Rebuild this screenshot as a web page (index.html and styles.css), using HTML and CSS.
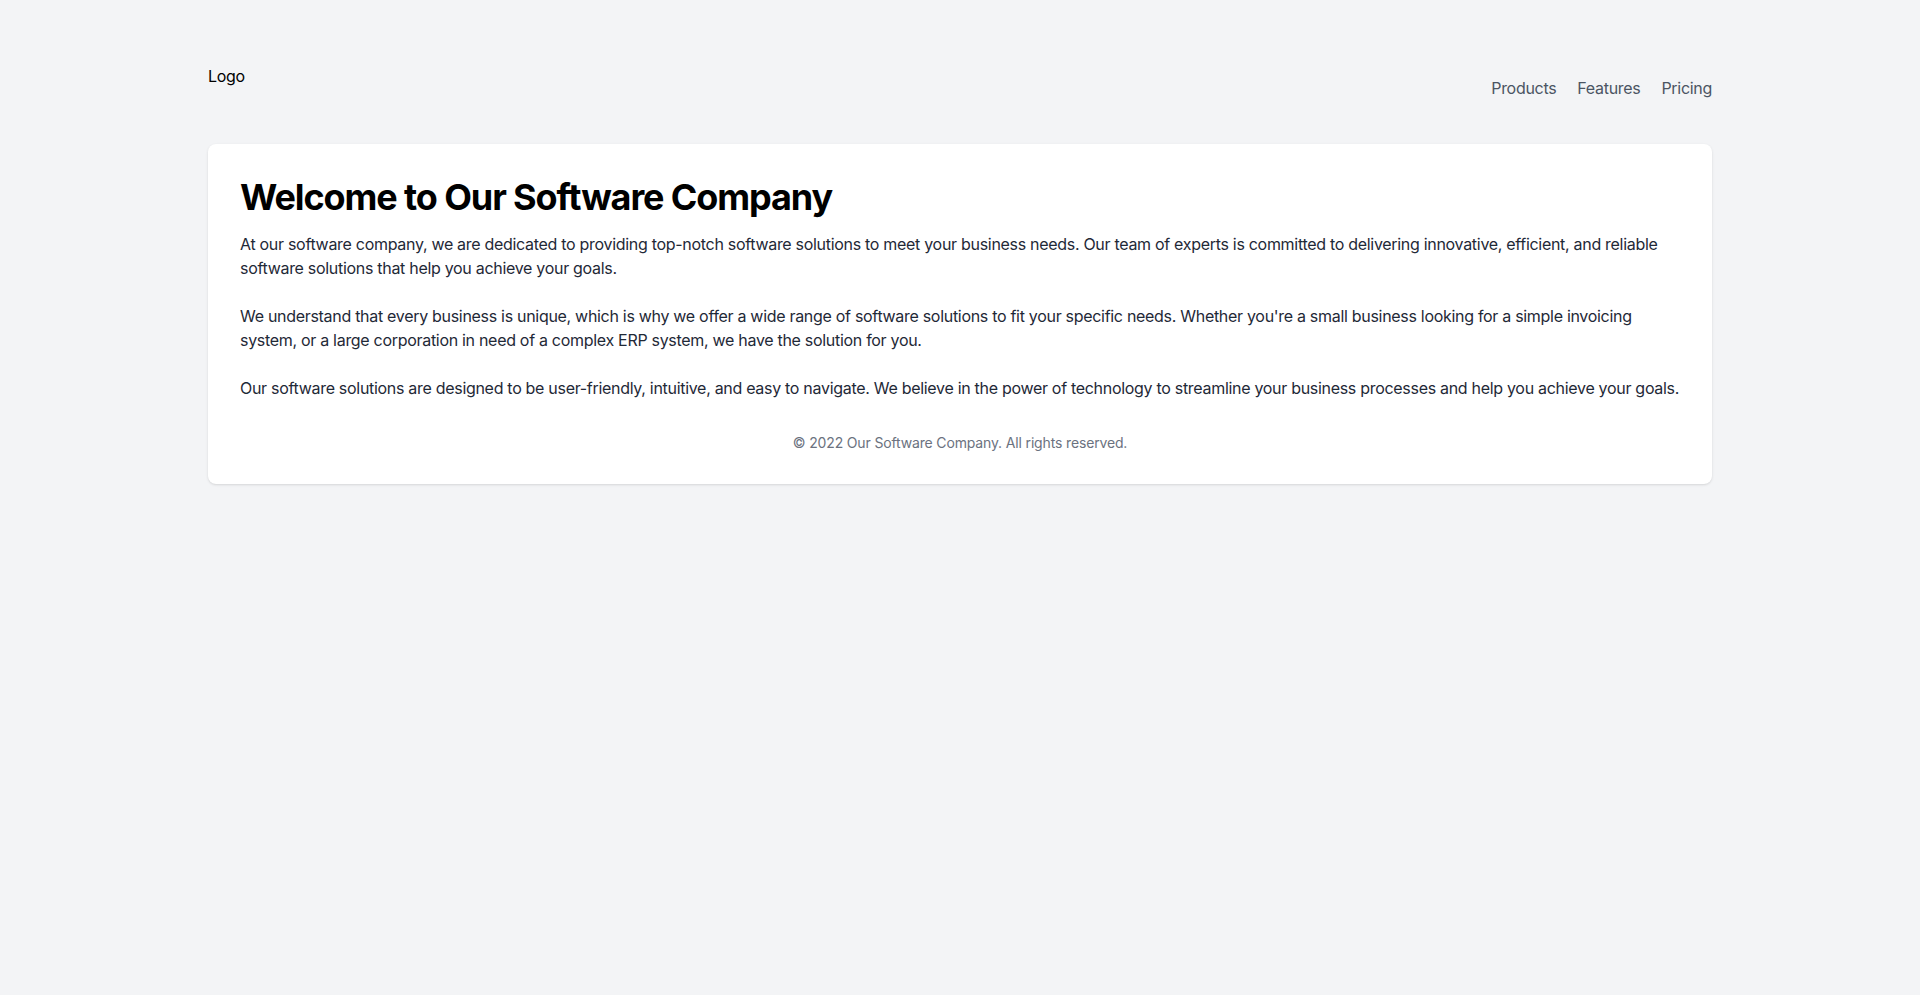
FILE: index.html
```html
<!DOCTYPE html>
<html lang="en">
<head>
<meta charset="utf-8">
<title>Our Software Company</title>
<link rel="stylesheet" href="styles.css">
</head>
<body>
<div class="container">
  <header class="header">
    <div class="logo">Logo</div>
    <nav class="nav">
      <a href="#" class="nav-link">Products</a>
      <a href="#" class="nav-link">Features</a>
      <a href="#" class="nav-link">Pricing</a>
    </nav>
  </header>
  <main class="card">
    <h1 class="title">Welcome to Our Software Company</h1>
    <p class="text text-first">At our software company, we are dedicated to providing top-notch software solutions to meet your business needs. Our team of experts is committed to delivering innovative, efficient, and reliable software solutions that help you achieve your goals.</p>
    <p class="text">We understand that every business is unique, which is why we offer a wide range of software solutions to fit your specific needs. Whether you're a small business looking for a simple invoicing system, or a large corporation in need of a complex ERP system, we have the solution for you.</p>
    <p class="text">Our software solutions are designed to be user-friendly, intuitive, and easy to navigate. We believe in the power of technology to streamline your business processes and help you achieve your goals.</p>
    <footer class="footer">© 2022 Our Software Company. All rights reserved.</footer>
  </main>
</div>
</body>
</html>
```

FILE: styles.css
```css
* { box-sizing: border-box; }
html, body { margin: 0; padding: 0; }
body {
  background: #f3f4f6;
  font-family: Inter, "Noto Sans", "Liberation Sans", sans-serif;
  font-size: 16px;
  line-height: 24px;
  letter-spacing: -0.3px;
  color: #000;
  min-height: 995px;
}
.container {
  max-width: 1536px;
  margin: 0 auto;
  padding: 64px 16px;
}
.header {
  display: flex;
  justify-content: space-between;
  align-items: center;
  margin-bottom: 32px;
}
.logo {
  height: 48px;
  font-size: 16px;
  line-height: 24px;
  color: #000;
}
.nav {
  display: flex;
  gap: 21px;
}
.nav-link {
  color: #4b5563;
  text-decoration: none;
  font-size: 16px;
  line-height: 24px;
}
.card {
  background: #fff;
  border-radius: 8px;
  box-shadow: 0 1px 3px 0 rgba(0,0,0,0.1), 0 1px 2px -1px rgba(0,0,0,0.1);
  padding: 32px;
}
.title {
  margin: 0 0 16px;
  padding-top: 1px;
  font-size: 36px;
  line-height: 40px;
  height: 40px;
  font-weight: 700;
  color: #000;
  letter-spacing: -1.1px;
}
.text {
  margin: 24px 0 0;
  color: #1f2937;
  font-size: 16px;
  line-height: 24px;
}
.text-first { margin-top: 0; }
.footer {
  margin-top: 32px;
  padding-top: 1px;
  height: 20px;
  text-align: center;
  font-size: 14px;
  line-height: 20px;
  letter-spacing: -0.15px;
  color: #6b7280;
}
```
